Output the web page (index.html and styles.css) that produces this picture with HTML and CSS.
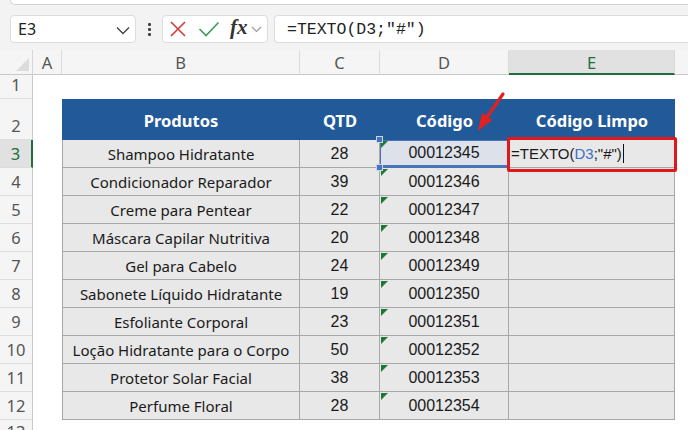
FILE: index.html
```html
<!DOCTYPE html>
<html lang="pt">
<head>
<meta charset="utf-8">
<title>Planilha</title>
<link rel="stylesheet" href="styles.css">
</head>
<body>
<div class="topstrip"></div>
<div class="fbar">
  <div class="namebox">
    <span>E3</span>
    <svg class="chev" width="14" height="9" viewBox="0 0 14 9"><path d="M1 1.5 L7 7.5 L13 1.5" fill="none" stroke="#444" stroke-width="1.4"/></svg>
  </div>
  <div class="vdots"><i></i><i></i><i></i></div>
  <div class="fxbox">
    <svg class="ic-x" width="18" height="18" viewBox="0 0 18 18"><path d="M2 2 L16 16 M16 2 L2 16" stroke="#d5393c" stroke-width="1.6" fill="none"/></svg>
    <svg class="ic-ok" width="22" height="16" viewBox="0 0 22 16"><path d="M1.5 8 L8 14.5 L20.5 1.5" stroke="#3f9a5c" stroke-width="1.6" fill="none"/></svg>
    <span class="fx">fx</span>
    <svg class="chev2" width="11" height="7" viewBox="0 0 11 7"><path d="M1 1 L5.5 5.5 L10 1" fill="none" stroke="#999" stroke-width="1.2"/></svg>
  </div>
  <div class="finput">=TEXTO(D3;"#")</div>
</div>

<div class="sheet">
  <div class="corner"><span class="tri"></span></div>
  <div class="ch">A</div>
  <div class="ch">B</div>
  <div class="ch">C</div>
  <div class="ch">D</div>
  <div class="ch ch-sel">E</div>
  <div class="ch ch-last"></div>

  <div class="rh">1</div>
  <div class="blank span"></div>

  <div class="rh">2</div>
  <div class="blank"></div>
  <div class="th">Produtos</div>
  <div class="th">QTD</div>
  <div class="th">Código</div>
  <div class="th">Código Limpo</div>
  <div class="blank"></div>

  <div class="rh rh-sel">3</div>
  <div class="blank"></div>
  <div class="td name first">Shampoo Hidratante</div>
  <div class="td num">28</div>
  <div class="td num code ref">00012345<span class="h h1"></span><span class="h h2"></span></div>
  <div class="td edit">=TEXTO(<span class="blue">D3</span>;"#")<span class="caret"></span><span class="redbox"></span></div>
  <div class="blank"></div>

  <div class="rh">4</div>
  <div class="blank"></div>
  <div class="td name first">Condicionador Reparador</div>
  <div class="td num">39</div>
  <div class="td num code">00012346</div>
  <div class="td"></div>
  <div class="blank"></div>

  <div class="rh">5</div>
  <div class="blank"></div>
  <div class="td name first">Creme para Pentear</div>
  <div class="td num">22</div>
  <div class="td num code">00012347</div>
  <div class="td"></div>
  <div class="blank"></div>

  <div class="rh">6</div>
  <div class="blank"></div>
  <div class="td name first">Máscara Capilar Nutritiva</div>
  <div class="td num">20</div>
  <div class="td num code">00012348</div>
  <div class="td"></div>
  <div class="blank"></div>

  <div class="rh">7</div>
  <div class="blank"></div>
  <div class="td name first">Gel para Cabelo</div>
  <div class="td num">24</div>
  <div class="td num code">00012349</div>
  <div class="td"></div>
  <div class="blank"></div>

  <div class="rh">8</div>
  <div class="blank"></div>
  <div class="td name first">Sabonete Líquido Hidratante</div>
  <div class="td num">19</div>
  <div class="td num code">00012350</div>
  <div class="td"></div>
  <div class="blank"></div>

  <div class="rh">9</div>
  <div class="blank"></div>
  <div class="td name first">Esfoliante Corporal</div>
  <div class="td num">23</div>
  <div class="td num code">00012351</div>
  <div class="td"></div>
  <div class="blank"></div>

  <div class="rh">10</div>
  <div class="blank"></div>
  <div class="td name first">Loção Hidratante para o Corpo</div>
  <div class="td num">50</div>
  <div class="td num code">00012352</div>
  <div class="td"></div>
  <div class="blank"></div>

  <div class="rh">11</div>
  <div class="blank"></div>
  <div class="td name first">Protetor Solar Facial</div>
  <div class="td num">38</div>
  <div class="td num code">00012353</div>
  <div class="td"></div>
  <div class="blank"></div>

  <div class="rh">12</div>
  <div class="blank"></div>
  <div class="td name first">Perfume Floral</div>
  <div class="td num">28</div>
  <div class="td num code">00012354</div>
  <div class="td"></div>
  <div class="blank"></div>

  <div class="rh rh-cut"><span>13</span></div>
  <div class="blank span"></div>

  <svg class="arrow" width="40" height="44" viewBox="0 0 40 44">
    <path d="M33 3 L17 26" stroke="#e3201e" stroke-width="3.2" stroke-linecap="round" fill="none"/>
    <path d="M8 40 L12 22 L22 29 Z" fill="#e3201e"/>
  </svg>
</div>
</body>
</html>
```

FILE: styles.css
```css
* { box-sizing: border-box; }
html, body { margin: 0; padding: 0; }
body {
  width: 688px;
  height: 430px;
  overflow: hidden;
  background: #f3f3f3;
  font-family: "Noto Sans", "Liberation Sans", sans-serif;
  color: #222;
}

.topstrip {
  height: 5px;
  margin-left: 10px;
  background: #fff;
  border-left: 1px solid #d4d4d4;
  border-bottom: 1px solid #d4d4d4;
  border-bottom-left-radius: 6px;
}

.fbar {
  display: flex;
  align-items: center;
  height: 28px;
  margin-top: 10px;
  padding-left: 10px;
}

.namebox {
  width: 126px;
  height: 28px;
  background: #fff;
  border: 1px solid #dcdcdc;
  border-radius: 4px;
  display: flex;
  align-items: center;
  justify-content: space-between;
  padding: 0 5px 0 7px;
  font-size: 16px;
  color: #222;
}
.namebox .chev { margin-top: 2px; }

.vdots {
  width: 26px;
  display: flex;
  flex-direction: column;
  align-items: center;
  gap: 2px;
}
.vdots i {
  display: block;
  width: 3px;
  height: 3px;
  background: #444;
  border-radius: 1px;
}

.fxbox {
  width: 106px;
  height: 28px;
  background: #fff;
  border: 1px solid #dcdcdc;
  border-radius: 4px;
  display: flex;
  align-items: center;
  padding-left: 6px;
}
.ic-x { margin-right: 11px; }
.ic-ok { margin-right: 10px; }
.fx {
  font-family: "Liberation Serif", "DejaVu Serif", serif;
  font-style: italic;
  font-weight: 700;
  font-size: 21px;
  color: #333;
  line-height: 1;
  margin-top: -3px;
  margin-right: 3px;
}
.chev2 { margin-top: 1px; }

.finput {
  flex: 1;
  height: 28px;
  margin-left: 6px;
  margin-right: -10px;
  background: #fff;
  border: 1px solid #dcdcdc;
  border-right: none;
  border-radius: 4px 0 0 4px;
  display: flex;
  align-items: center;
  padding-left: 12px;
  font-family: "Liberation Mono", "DejaVu Sans Mono", monospace;
  font-size: 16.5px;
  color: #222;
}

/* Sheet */
.sheet {
  position: relative;
  margin-top: 7px;
  display: grid;
  grid-template-columns: 33px 29px 238px 80px 129px 166px 1fr;
  grid-template-rows: 25px 24px 41px repeat(10, 28px) 30px;
  background: #fff;
}

.corner {
  position: relative;
  background: #f5f5f5;
  border-right: 1px solid #d6d6d6;
  border-bottom: 1px solid #c8c8c8;
}
.corner .tri {
  position: absolute;
  right: 3px;
  bottom: 3px;
  width: 0;
  height: 0;
  border-left: 13px solid transparent;
  border-bottom: 13px solid #dcdcdc;
}

.ch {
  background: #f5f5f5;
  border-right: 1px solid #dadada;
  border-bottom: 1px solid #c8c8c8;
  display: flex;
  align-items: center;
  justify-content: center;
  font-size: 16.5px;
  color: #555;
  padding-top: 1px;
}
.ch-sel {
  background: #e1e1e1;
  color: #1f6e3d;
  border-bottom: 2px solid #1f6e3d;
}
.ch-last { border-right: none; }

.rh {
  background: #f5f5f5;
  border-right: 1px solid #c8c8c8;
  border-bottom: 1px solid #dedede;
  display: flex;
  align-items: flex-end;
  justify-content: center;
  padding-bottom: 1px;
  font-size: 16.5px;
  color: #555;
  line-height: 24px;
}
.rh-sel {
  background: #e1e1e1;
  color: #1f6e3d;
  border-right: 2px solid #1f6e3d;
}
.rh-cut {
  align-items: flex-start;
  padding-top: 0;
  overflow: hidden;
}

.blank { background: #fff; }
.span { grid-column: 2 / -1; }

.th {
  background: #225a99;
  color: #fff;
  font-weight: 700;
  font-size: 16.5px;
  display: flex;
  align-items: center;
  justify-content: center;
  padding-top: 1px;
}

.td {
  position: relative;
  background: #e8e8e8;
  border-right: 1px solid #a8a8a8;
  border-bottom: 1px solid #a8a8a8;
  display: flex;
  align-items: center;
  justify-content: center;
  font-size: 15px;
  color: #1a1a1a;
}
.td.first { border-left: 1px solid #a8a8a8; }
.name { font-family: "Noto Sans", sans-serif; font-size: 15px; }
.num { font-family: "Liberation Sans", Arial, sans-serif; font-size: 16px; }

.code::before {
  content: "";
  position: absolute;
  left: 1px;
  top: 1px;
  width: 0;
  height: 0;
  border-top: 7px solid #1c7a33;
  border-right: 7px solid transparent;
}

.ref {
  background: #dce1ea;
  box-shadow: inset 0 0 0 1px #4a72b8;
  border-bottom: 2px solid #4a72b8;
  border-right: 1px solid #4a72b8;
}
.h {
  position: absolute;
  left: -4px;
  width: 7px;
  height: 7px;
  background: #4a72b8;
  border: 1px solid #c8d4ea;
  z-index: 2;
}
.h1 { top: -4px; }
.h2 { bottom: -5px; }

.edit {
  justify-content: flex-start;
  padding-left: 2px;
  font-family: "Liberation Sans", Arial, sans-serif;
  font-size: 15px;
}
.blue { color: #3b6fc4; }
.caret {
  display: inline-block;
  width: 1px;
  height: 19px;
  background: #111;
  margin-left: 1px;
}
.redbox {
  position: absolute;
  left: -2px;
  top: -3px;
  right: -3px;
  bottom: -5px;
  border: 3px solid #e3161c;
  border-radius: 2px;
  z-index: 3;
}

.arrow {
  position: absolute;
  left: 470px;
  top: 41px;
  z-index: 4;
}
```
